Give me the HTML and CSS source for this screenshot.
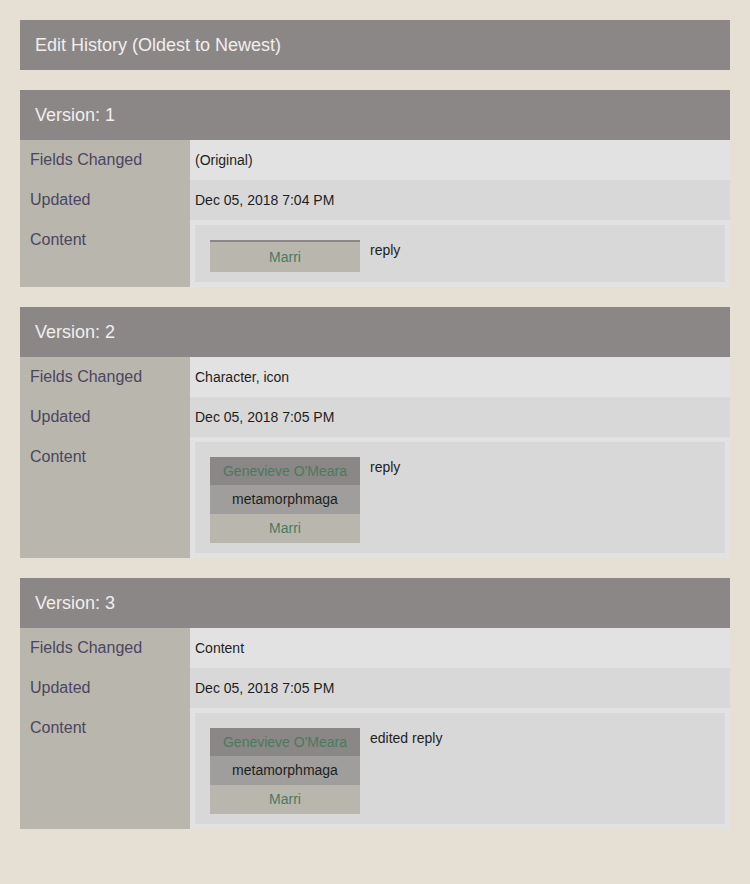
FILE: index.html
```html
<!DOCTYPE html>
<html>
<head>
<meta charset="utf-8">
<link rel="stylesheet" href="styles.css">
</head>
<body>
<div class="page">
  <div class="title">Edit History (Oldest to Newest)</div>

  <section class="version">
    <div class="vhead">Version: 1</div>
    <div class="grid">
      <div class="label">Fields Changed</div>
      <div class="val odd">(Original)</div>
      <div class="label">Updated</div>
      <div class="val even">Dec 05, 2018 7:04 PM</div>
      <div class="label">Content</div>
      <div class="val odd content">
        <div class="post">
          <div class="icon">
            <div class="noname"></div>
            <div class="author solo">Marri</div>
          </div>
          <div class="text">reply</div>
        </div>
      </div>
    </div>
  </section>

  <section class="version">
    <div class="vhead">Version: 2</div>
    <div class="grid">
      <div class="label">Fields Changed</div>
      <div class="val odd">Character, icon</div>
      <div class="label">Updated</div>
      <div class="val even">Dec 05, 2018 7:05 PM</div>
      <div class="label">Content</div>
      <div class="val odd content">
        <div class="post">
          <div class="icon">
            <div class="char">Genevieve O'Meara</div>
            <div class="screen">metamorphmaga</div>
            <div class="author">Marri</div>
          </div>
          <div class="text">reply</div>
        </div>
      </div>
    </div>
  </section>

  <section class="version">
    <div class="vhead">Version: 3</div>
    <div class="grid">
      <div class="label">Fields Changed</div>
      <div class="val odd">Content</div>
      <div class="label">Updated</div>
      <div class="val even">Dec 05, 2018 7:05 PM</div>
      <div class="label">Content</div>
      <div class="val odd content">
        <div class="post">
          <div class="icon">
            <div class="char">Genevieve O'Meara</div>
            <div class="screen">metamorphmaga</div>
            <div class="author">Marri</div>
          </div>
          <div class="text">edited reply</div>
        </div>
      </div>
    </div>
  </section>
</div>
</body>
</html>
```
FILE: styles.css
```css
html, body {
  margin: 0;
  padding: 0;
  background: #e6dfd3;
  font-family: "Liberation Sans", Arial, sans-serif;
}
.page {
  padding: 20px;
  display: flex;
  flex-direction: column;
  gap: 20px;
}
.title, .vhead {
  background: #8b8787;
  color: #f1eeee;
  font-size: 18px;
  height: 50px;
  line-height: 50px;
  padding: 0 15px;
}
.grid {
  display: grid;
  grid-template-columns: 170px 1fr;
}
.label {
  background: #b9b6ae;
  color: #4b4660;
  font-size: 16px;
  line-height: 20px;
  padding: 10px 10px;
}
.val {
  font-size: 14px;
  color: #1e1e1e;
  line-height: 20px;
  padding: 10px 5px;
}
.odd { background: #e2e2e2; }
.even { background: #d8d8d8; }
.content {
  padding: 5px;
}
.post {
  background: #d8d8d8;
  padding: 15px 15px 10px 15px;
  display: flex;
  align-items: flex-start;
}
.icon {
  width: 150px;
  flex: none;
  text-align: center;
  font-size: 14px;
}
.icon > div {
  padding: 6px 0;
  line-height: 16.67px;
}
.icon > .noname {
  height: 2px;
  padding: 0;
  background: #8b8787;
}
.icon > .solo {
  padding: 7px 0 6px;
}
.char {
  background: #8b8787;
  color: #4a7a5e;
}
.screen {
  background: #a09e9c;
  color: #1e1e1e;
}
.author {
  background: #b9b6ae;
  color: #4a7a5e;
}
.text {
  margin-left: 10px;
  font-size: 14px;
  line-height: 16px;
  color: #1e1e1e;
  margin-top: 2px;
}
```
